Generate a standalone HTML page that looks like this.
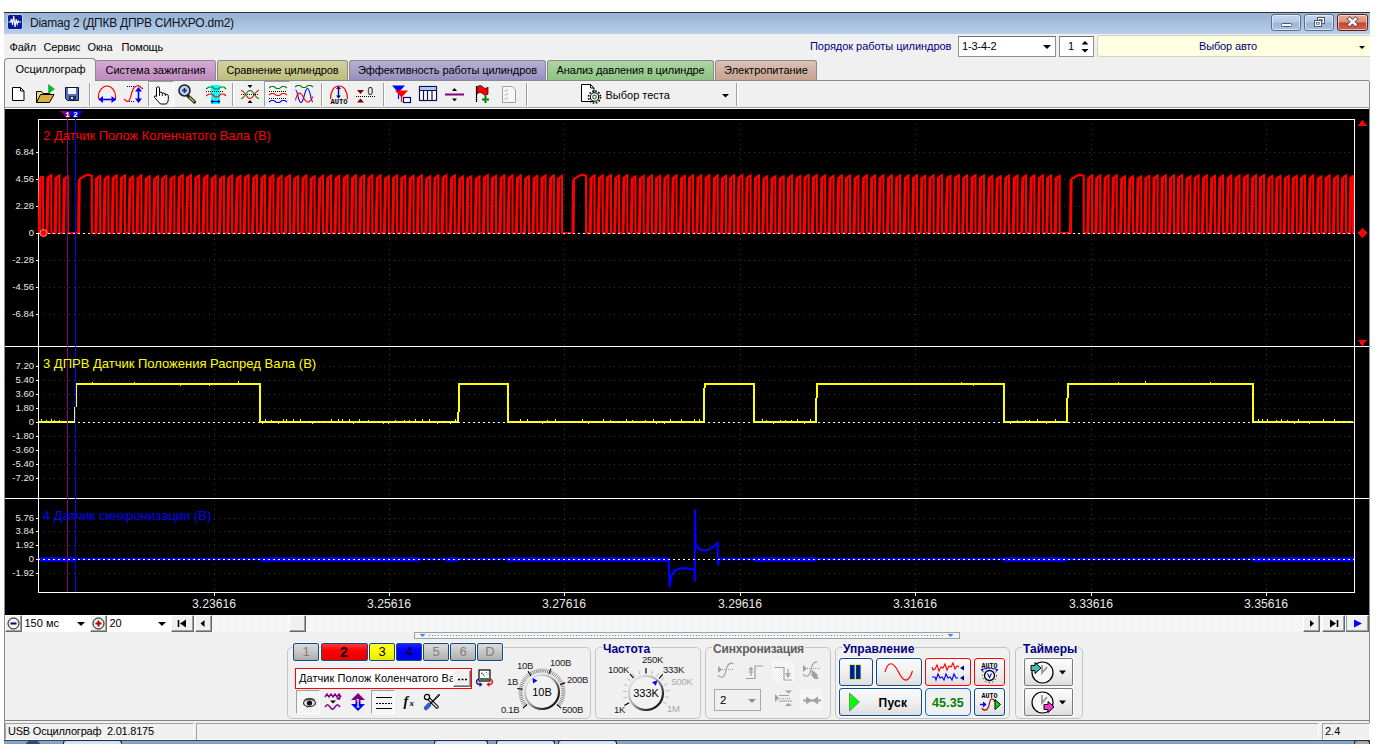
<!DOCTYPE html>
<html lang="ru"><head><meta charset="utf-8"><title>Diamag 2</title>
<style>
html,body{margin:0;padding:0;background:#fff;}
body{width:1382px;height:744px;overflow:hidden;position:relative;font-family:"Liberation Sans",sans-serif;font-size:11px;color:#000;}
#win{position:absolute;left:4px;top:12px;width:1366px;height:732px;background:#f0f0f0;overflow:hidden;}
#win *{box-sizing:border-box;}
#win div,#win span,#win svg,#win i,#win b{position:absolute;}
#win span,#win b{white-space:pre;line-height:14px;height:14px;}
#lb{left:0;top:52px;width:1px;height:680px;background:#8c8c8c;}
#rb{left:1365px;top:69px;width:1px;height:663px;background:#8c8c8c;}
#tb{left:0;top:0;width:1366px;height:22px;background:linear-gradient(#98b4d2 0%,#9db8d6 25%,#a8c2df 55%,#b8d0ea 100%);border-top:1px solid #343434;}
#tb .ttl{left:26px;top:3px;font-size:12px;letter-spacing:-0.25px;color:#101020;}
.cap{top:1px;height:17px;width:30px;border:1px solid #5a6f8c;border-radius:3px;background:linear-gradient(#c3d6ec 0%,#b4cbe6 48%,#97b4d6 52%,#a9c4e2 100%);box-shadow:inset 0 0 0 1px rgba(255,255,255,.55);}
.cap.x{background:linear-gradient(#e9a99b 0%,#dd8d7c 48%,#c4452c 52%,#d0674f 100%);border-color:#5c1f1c;}
#menu span{top:27.5px;letter-spacing:-0.15px;}
.navy{color:#000080;}
.combo{background:#fff;border:1px solid #8e8f8f;border-top-color:#6f6f6f;}
.arr{width:0;height:0;border-left:4px solid transparent;border-right:4px solid transparent;border-top:4px solid #000;}
.tab{top:48px;height:20px;border:1px solid #8a8a8a;border-bottom:none;border-radius:3px 3px 0 0;text-align:center;}
.tab span{position:static !important;display:inline-block;line-height:19px !important;height:19px !important;}
.tab.on{top:46px;height:23px;background:#f0f0f0;z-index:2;border-radius:4px 4px 0 0;}
.tab.on span{line-height:20px !important;padding-left:1px;}
#tabline{left:1px;top:68px;width:1364px;height:1px;background:#8a8a8a;}
#tbar{left:1px;top:69px;width:1364px;height:28px;background:#f0f0f0;border-bottom:1px solid #fff;}
#tbar:after{content:"";position:absolute;left:0;right:0;bottom:0;height:1px;background:#a0a0a0;}
.sep{top:2px;width:2px;height:23px;border-left:1px solid #a0a0a0;border-right:1px solid #fff;}
.chk{background-image:conic-gradient(#fff 25%,#ececec 0 50%,#fff 0 75%,#ececec 0);background-size:2px 2px;border:1px solid;border-color:#a0a0a0 #fff #fff #a0a0a0;}
#plot{left:1px;top:97px;width:1364px;height:506px;background:#000;}
#plot svg{left:0;top:0;}
#srow{background-color:#f7f7f7;background-image:conic-gradient(#fff 25%,#eee 0 50%,#fff 0 75%,#eee 0);background-size:2px 2px;}
.btn3{background:#f0f0f0;border:1px solid;border-color:#fff #696969 #696969 #fff;box-shadow:inset -1px -1px 0 #a0a0a0;}
#panel{background:#f0f0f0;border-bottom:1px solid #828282;}
.grp{border:1px solid #c4c4c4;border-radius:5px;}
.grp b{top:-6px;left:6px;font-size:12px;background:#f0f0f0;padding:0 1px;font-weight:bold;line-height:14px;}
.chb{border:1px solid #0f4a8a;border-radius:2px;text-align:center;font-size:13px;line-height:16px;color:#808080;background:linear-gradient(#dcdcdc,#c6c6c6 50%,#aeaeae);box-shadow:0 0 0 1px rgba(255,255,255,.6);}
.cb{border:1px solid #0f4a8a;border-radius:3px;background:linear-gradient(#fbfbfb,#f0f0f0 50%,#dedede);box-shadow:0 0 0 1px rgba(255,255,255,.7);}
.cb.r{border-color:#ff0000;}
.cb.bl{border-color:#1565c0;background:#f0f0f0;border-radius:4px;}
.cb.g{border-color:#7c7c7c;border-radius:2px;}
.kl{font-size:9.5px;letter-spacing:-0.3px;color:#202020;}
.kl.d{color:#a8a8a8;}
#status{left:1px;top:710px;width:1364px;height:18px;}
.sp{top:1px;height:16px;border:1px solid;border-color:#a0a0a0 #fff #fff #a0a0a0;}
#task{left:0;top:728px;width:1366px;height:4px;background:linear-gradient(#344258 0,#344258 1px,#92abcf 1px,#7f9ac1 100%);}
#task i{top:0;height:4px;border:1px solid #1c2638;border-bottom:none;border-radius:3px 3px 0 0;background:#d3e2f3;}

</style></head>
<body>
<div id="win">
<div id="tb">
<svg style="left:2.500px;top:1px" width="16" height="16" viewBox="0 0 16 16"><rect x="0.5" y="0.5" width="15" height="15" rx="2" fill="#0a1a9c" stroke="#c8d8f0"/><path d="M1.5 8h2l1-3 1 6 1.2-9 1.3 11 1.2-8 1 5 1-3 .8 1h2" fill="none" stroke="#fff" stroke-width="1.1"/></svg>
<span class="ttl">Diamag 2 (ДПКВ ДПРВ СИНХРО.dm2)</span>
<div class="cap" style="left:1267px"><svg width="28" height="14" viewBox="0 0 28 14" style="left:0;top:0"><rect x="9.5" y="8.5" width="10" height="3" rx="1" fill="#fff" stroke="#50586a"/></svg></div>
<div class="cap" style="left:1300px"><svg width="28" height="14" viewBox="0 0 28 14" style="left:0;top:0"><rect x="12.500" y="2.500" width="7" height="6" fill="#fff" stroke="#50586a"/><rect x="14.5" y="4.500" width="3" height="2" fill="#b8cce4" stroke="#50586a" stroke-width=".6"/><rect x="9.500" y="5.500" width="7" height="6" fill="#fff" stroke="#50586a"/><rect x="11.5" y="7.500" width="3" height="2" fill="#b8cce4" stroke="#50586a" stroke-width=".6"/></svg></div>
<div class="cap x" style="left:1333px;width:31px"><svg width="29" height="14" viewBox="0 0 29 14" style="left:0;top:0"><path d="M11.500 4l6 5.500M17.500 4l-6 5.500" stroke="#50404a" stroke-width="4" stroke-linecap="square"/><path d="M11.500 4l6 5.500M17.500 4l-6 5.500" stroke="#fff" stroke-width="2.400" stroke-linecap="square"/></svg></div>
</div>
<div id="lb"></div><div id="rb"></div>
<div id="menu">
<span style="left:5.500px">Файл</span><span style="left:39.500px">Сервис</span><span style="left:83.500px">Окна</span><span style="left:117.500px">Помощь</span>
<span class="navy" style="left:806px;top:27px;letter-spacing:-0.04px">Порядок работы цилиндров</span>
<div class="combo" style="left:954px;top:24px;width:98px;height:21px"><span style="left:3px;top:2px">1-3-4-2</span><i class="arr" style="left:84px;top:8px"></i></div>
<div class="combo" style="left:1055px;top:24px;width:35px;height:21px"><span style="left:8px;top:2px">1</span>
<svg width="12" height="16" viewBox="0 0 12 16" style="left:19px;top:2px"><path d="M2.500 5.500l3.500-3.500 3.500 3.500zM2.500 10l3.500 3.500 3.500-3.500z" fill="#000"/></svg></div>
<div style="left:1093px;top:23px;width:273px;height:22px;background:#ffffe1;border:1px solid #d4d0c0;border-radius:3px 0 0 3px;border-right:none"><span class="navy" style="left:101px;top:2.500px">Выбор авто</span><i class="arr" style="left:261px;top:10px;border-left-width:3px;border-right-width:3px;border-top-width:3px"></i></div>
</div>
<div id="tabs">
<div class="tab on" style="left:0;width:92px"><span style="letter-spacing:-0.1px">Осциллограф</span></div>
<div class="tab" style="left:91px;width:121px;background:linear-gradient(#d5abd5,#c797c7 60%,#bd8bbd)"><span>Система зажигания</span></div>
<div class="tab" style="left:213px;width:131px;background:linear-gradient(#d2d2a0,#c6c68a 60%,#bcbc7c)"><span style="letter-spacing:-0.18px">Сравнение цилиндров</span></div>
<div class="tab" style="left:345px;width:197px;background:linear-gradient(#b6b0d4,#a59ec8 60%,#968eba)"><span style="letter-spacing:-0.09px">Эффективность работы цилиндров</span></div>
<div class="tab" style="left:543px;width:167px;background:linear-gradient(#aed6a4,#9aca90 60%,#8ec284)"><span style="letter-spacing:-0.1px">Анализ давления в цилиндре</span></div>
<div class="tab" style="left:711px;width:102px;background:linear-gradient(#dcc2b6,#cfae9f 60%,#c6a292)"><span>Электропитание</span></div>
<div id="tabline"></div>
</div>

<div id="tbar">
<div class="chk" style="left:143px;top:0;width:26px;height:26px"></div>
<div class="chk" style="left:259px;top:0;width:26px;height:26px"></div>
<div class="sep" style="left:84px"></div><div class="sep" style="left:227px"></div><div class="sep" style="left:316px"></div><div class="sep" style="left:378px"></div><div class="sep" style="left:521px"></div><div class="sep" style="left:731px"></div>
<svg width="760" height="27" viewBox="0 0 760 27" style="left:0;top:1px" fill="none">
<!-- new -->
<path d="M7.500 5.500h8l3.500 3.500v9.500h-11.500z" fill="#fff" stroke="#000"/><path d="M15.500 5.500v3.500h3.500" stroke="#000"/>
<!-- open -->
<path d="M31.500 20.500v-11h5l1.500 2h7v2.500" fill="#e8d890" stroke="#000"/><path d="M31.500 20.500l4-8h13.500l-4.500 8z" fill="#d8b040" stroke="#000"/><path d="M43.500 2.500l6 4.500-6 4.500z" fill="#00c020" stroke="#00a018" stroke-width=".5"/>
<!-- save -->
<path d="M60.500 5.500h13v13h-11l-2-2z" fill="#5070c8" stroke="#101040"/><rect x="63" y="6" width="8" height="6" fill="#fff"/><rect x="64" y="14" width="7" height="4" fill="#283060"/><rect x="66" y="15" width="2" height="2" fill="#e0e8ff"/>
<!-- 4: arc + h arrow -->
<path d="M93.500 17v-3c0-5 4-10 8.500-10s8.500 5 8.500 10v3" stroke="#ff0000" stroke-width="1.200"/><path d="M94 17.500h17" stroke="#0000ff" stroke-width="1.600"/><path d="M93.500 17.500l4.500-3.500v7zM111 17.500l-4.500-3.500v7z" fill="#0000ff"/>
<!-- 5: s-curve + v arrow -->
<path d="M122 4.500h8M122 19.500h8" stroke="#000" stroke-dasharray="1 1"/><path d="M119 17l3 2.500c3 0 3.500-4 4.500-8s3-8 7-8l4.500 3.500" stroke="#ff0000" stroke-width="1.200"/><path d="M133.500 8v9" stroke="#0000ff" stroke-width="1.600"/><path d="M133.500 5l3.500 4.500h-7zM133.500 21l3.500-4.500h-7z" fill="#0000ff"/>
<!-- 6: hand -->
<path d="M151.5 5.500q1.500-1.600 3 0V10.500q1.400-1 2.800.2v.8q1.500-1 3 .2v.9q1.600-.7 3 .7V17.500q0 2.300-2 4.500H155.500L149.500 15.500q-.5-1.900 1.500-1.600l.5.600z" fill="#fff" stroke="#000" stroke-width="1"/><path d="M154.500 10.500v3.500M157.300 11.500v2.500M160.300 12v2" stroke="#000" stroke-width=".9"/>
<!-- 7: magnifier -->
<path d="M183 14l6.500 6" stroke="#202020" stroke-width="3.200" stroke-linecap="round"/><path d="M184.500 15.500l4.500 4" stroke="#e0b040" stroke-width="1.400" stroke-linecap="round"/><circle cx="179.500" cy="8.500" r="5.500" fill="#b8d0f0" stroke="#202020" stroke-width="1.500"/><path d="M177 8.500h5M179.500 6v5" stroke="#10307c" stroke-width="1.600"/>
<!-- 8: cyan waves -->
<rect x="206" y="3" width="9" height="19" fill="#00ffff"/><path d="M201 7l3-2 3 0 3 2 3 0 3-2 3 0 2 2" stroke="#008000" stroke-width="1.200"/><path d="M201 9.500h18" stroke="#000" stroke-dasharray="1 1"/><path d="M201 14l3-2 3 0 3 3 3 0 3-3 3 0 2 2" stroke="#ff0000" stroke-width="1.200"/><path d="M206.500 19.500h8" stroke="#0000a0" stroke-width="1.200"/><path d="M205.500 19.500l2.500-2v4zM215.500 19.500l-2.500-2v4z" fill="#0000a0"/>
<!-- 9: crossing -->
<path d="M242.500 3h5l-2.500 3zM242.500 21h5l-2.500-3z" fill="#000"/><path d="M236 12.500h18" stroke="#000" stroke-dasharray="1 1"/><path d="M236 8.500c4 0 5 8 9 8s5-8 9-8" stroke="#ff0000" stroke-width="1.200"/><path d="M236 16.500c4 0 5-8 9-8s5 8 9 8" stroke="#008000" stroke-width="1.200"/>
<!-- 10: three waves -->
<path d="M264 6l2-1.500h3l2.500 2h3l2.500-2h3l2 1.500" stroke="#008000" stroke-width="1.100"/><path d="M264 9.500h17M264 16.500h17" stroke="#000" stroke-dasharray="1 1"/><path d="M264 13l2-1.500h3l2.500 2h3l2.500-2h3l2 1.500" stroke="#ff0000" stroke-width="1.100"/><path d="M264 20l2-1.500h3l2.500 2h3l2.500-2h3l2 1.500" stroke="#0000ff" stroke-width="1.100"/>
<!-- 11: multi -->
<path d="M290 5l2-1.500h3l2.500 2h3l2.500-2h3l2 1.500" stroke="#008000" stroke-width="1.100"/><path d="M290.500 8c2.500 0 2.500 12.500 5.500 12.500s3.500-14 6.500-14 3 13.500 5.500 13.500" stroke="#0000ff" stroke-width="1.100"/><path d="M290.500 18.500c1.500-8 4.500-9 6.500-5.500s3.500 8 6.500 7 3-3.500 4.500-5.500" stroke="#ff0000" stroke-width="1.100"/>
<!-- 12: auto -->
<path d="M325.500 17c0-7 3-13 8.500-13s8.500 6 8.500 13" stroke="#ff0000" stroke-width="1.200"/><path d="M333.500 6v9" stroke="#000080" stroke-width="1.400"/><path d="M333.500 4l2.500 3h-5zM333.500 16.500l2.500-3h-5z" fill="#000080"/>
<text x="325.500" y="21.500" font-family="'Liberation Mono',monospace" font-size="6.500" font-weight="bold" fill="#000" textLength="17" lengthAdjust="spacingAndGlyphs">AUTO</text>
<!-- 13: zero -->
<path d="M352 8h7l-3.500 4zM352 20.500h7l-3.500-4z" fill="#800000"/><path d="M351 14.500h19" stroke="#000" stroke-dasharray="1 1"/>
<text x="362.500" y="12.500" font-family="'Liberation Sans',sans-serif" font-size="10" fill="#000">0</text>
<!-- 14: cursors -->
<path d="M387 3.500h13l-6.500 7z" fill="#0000ff"/><path d="M393.500 10v7" stroke="#0000ff" stroke-width="1.200"/><path d="M390 8.500h13l-6.500 7z" fill="#ff0000"/><path d="M396.500 15v5" stroke="#ff0000" stroke-width="1.200"/><rect x="398.500" y="15.500" width="7" height="5" fill="#fff" stroke="#000080" stroke-width="1.200"/>
<!-- 15: table -->
<rect x="414.500" y="4.500" width="17" height="14" fill="#fff" stroke="#101050" stroke-width="1.200"/><rect x="415" y="5" width="16" height="3" fill="#a8c8f0"/><path d="M418.500 8v10M422.500 8v10M427 8v10M415 8.500h16" stroke="#101050" stroke-width="1.200"/>
<!-- 16: purple line -->
<path d="M440 12.500h19" stroke="#800080" stroke-width="2"/><path d="M447 9h5l-2.500-3zM447 16.500h5l-2.500 3z" fill="#000"/>
<!-- 17: flag -->
<path d="M471.500 4v16" stroke="#000" stroke-width="1.200"/><path d="M472 5c2-2 4-2 6 0s3.500 1.500 5 0v7c-1.500 1.500-3 2-5 0s-4-2-6 0z" fill="#ff0000" stroke="#000" stroke-width=".7"/><path d="M477 17.500h7M480.500 14v7" stroke="#008000" stroke-width="2"/>
<!-- 18: disabled doc -->
<path d="M497.500 4.500h9.500l3.500 3.500v12.500h-13z" fill="#f8f8f8" stroke="#a0a0a0"/><path d="M499.500 8l1.500 1.500 2-2.500M499.500 12l1.500 1.500 2-2.500M499.500 16l1.500 1.500 2-2.500" stroke="#a8a8a8" stroke-width=".9"/>
<!-- 19: doc + gear -->
<path d="M576.500 2.500h9l3.500 3.500v13.500h-12.500z" fill="#fff" stroke="#000"/><path d="M585.500 2.500v3.500h3.500" stroke="#000"/><circle cx="589.500" cy="15" r="4.200" fill="#fff" stroke="#000" stroke-width="1.100"/><circle cx="589.500" cy="15" r="6" stroke="#000" stroke-width="1.600" stroke-dasharray="1.600 1.540"/><circle cx="589.500" cy="15" r="1.800" fill="#fff" stroke="#308030" stroke-width="1.200"/>
<path d="M717 12h7l-3.500 3.500z" fill="#000"/>
</svg>
<span style="left:600.500px;top:7px">Выбор теста</span>
</div>

<div id="plot">
<svg class="plot" width="1364" height="506" viewBox="0 0 1364 506" shape-rendering="crispEdges">
<rect width="1364" height="506" fill="#000"/>
<path d="M39 43.5 H1346 M39 70.5 H1346 M39 97.5 H1346 M39 151.5 H1346 M39 178.5 H1346 M39 205.5 H1346 M39 257.5 H1346 M39 271.5 H1346 M39 285.5 H1346 M39 299.5 H1346 M39 327.5 H1346 M39 341.5 H1346 M39 355.5 H1346 M39 369.5 H1346 M39 409.5 H1346 M39 422.5 H1346 M39 436.5 H1346 M39 464.5 H1346" stroke="#36360b" stroke-width="1" stroke-dasharray="1 4" fill="none"/>
<path d="M209.5 15 V483 M384.5 15 V483 M559.5 15 V483 M735.5 15 V483 M910.5 15 V483 M1086.5 15 V483 M1261.5 15 V483" stroke="#36360b" stroke-width="1" stroke-dasharray="1 4" fill="none"/>
<path d="M33 10.5 H1350 M33.5 10 V484 M1349.5 10 V484 M33 483.5 H1350 M0 237.5 H1364 M0 389.5 H1364" stroke="#fff" stroke-width="1" fill="none"/>
<path d="M31 43.5 h2 M31 70.5 h2 M31 97.5 h2 M31 124.5 h2 M31 151.5 h2 M31 178.5 h2 M31 205.5 h2 M31 257.5 h2 M31 271.5 h2 M31 285.5 h2 M31 299.5 h2 M31 313.5 h2 M31 327.5 h2 M31 341.5 h2 M31 355.5 h2 M31 369.5 h2 M31 409.5 h2 M31 422.5 h2 M31 436.5 h2 M31 450.5 h2 M31 464.5 h2 M209.5 484 v3 M384.5 484 v3 M559.5 484 v3 M735.5 484 v3 M910.5 484 v3 M1086.5 484 v3 M1261.5 484 v3" stroke="#fff" stroke-width="1" fill="none"/>
<path d="M34 450.5 H70 M255 450.5 H414 M441 450.5 H453 M502 450.5 H664 M749 450.5 H811 M999 450.5 H1062 M1247 450.5 H1349" stroke="#0000ff" stroke-width="4.6" fill="none" shape-rendering="geometricPrecision"/>
<path d="M34 450 L663.6 450 L664.3 466 L664.6 477.5 L665.3 471 L666.5 467 L668.5 463 L671 461 L674 459.6 L678 459.2 L683 459.6 L687 460.2 L689.6 460.5 L689.8 471.5 L690 401.5 L690.3 432 L691 436 L693 439 L696 440.8 L699 441.6 L703 440.8 L707 438.6 L710 436.4 L712.6 433.6 L713 455.5 L714 451 L715.5 449 L717 450.5 L719 450 L1348 450" stroke="#0000ff" stroke-width="2.3" fill="none" stroke-linejoin="round" shape-rendering="geometricPrecision"/>
<path d="M34 313 L70.2 313 L71 275 L255 275 L255 313 L453.3 313 L454.1 275 L503.2 275 L503.2 313 L698.8 313 L699.6 275 L748.9 275 L748.9 313 L811 313 L811.8 275 L999 275 L999 313 L1062 313 L1062.8 275 L1248.3 275 L1248.3 313 L1348 313" stroke="#ffff00" stroke-width="2" fill="none"/>
<path d="M36 312 v-2 M41.4 312 v-1.5 M46.6 312 v-2 M49.8 312 v-1.5 M54.2 312 v-1.5 M62.2 312 v-2 M69 312 v-1.5 M87.2 274 v-1.5 M129.2 274 v-1.5 M175 274 v2.5 M204.9 274 v2.5 M233.3 274 v-2 M257.2 312 v3 M260.6 312 v-2.5 M266.4 312 v-1.5 M273.8 312 v3 M278.5 312 v-2.5 M281.7 312 v-2 M288.3 312 v-2 M295.9 312 v-2 M307.3 312 v3 M326.2 312 v-2.5 M333.3 312 v-2 M337.2 312 v-2 M344.1 312 v-2 M348.7 312 v3 M354.9 312 v-2.5 M363.7 312 v-1.5 M378.1 312 v3 M383.5 312 v3 M390.3 312 v-1.5 M399.2 312 v-1.5 M404.2 312 v-1.5 M410.6 312 v-2.5 M417.3 312 v-2 M424 312 v-2.5 M432.7 312 v3 M445.4 312 v3 M450.3 312 v-2.5 M515.5 312 v-2.5 M522.4 312 v-2 M537.6 312 v3 M542.8 312 v-1.5 M550.5 312 v-2 M577.5 312 v-2 M583.3 312 v3 M598.1 312 v-2.5 M605.9 312 v-1.5 M621.8 312 v-2 M627.4 312 v-1.5 M640.6 312 v-1.5 M648 312 v-2 M651.1 312 v3 M659 312 v3 M665.9 312 v-2 M676.4 312 v-2 M689.9 312 v-2.5 M694.2 312 v-2.5 M698.8 312 v-2 M757.8 312 v-2 M761.8 312 v-1.5 M768.2 312 v3 M775.9 312 v-1.5 M780.4 312 v-1.5 M786.4 312 v-1.5 M792.1 312 v-2 M799.2 312 v3 M805.3 312 v-2.5 M956.3 274 v-1.5 M968.1 274 v2.5 M1005.1 312 v3 M1012.3 312 v-1.5 M1020.1 312 v-1.5 M1024.8 312 v-1.5 M1032.6 312 v-2 M1041.7 312 v3 M1050.3 312 v-2 M1113.6 274 v-1.5 M1140.5 274 v-2 M1205.1 274 v-1.5 M1253 312 v-2 M1257 312 v-2.5 M1262.1 312 v-2.5 M1271.5 312 v-1.5 M1276.5 312 v-2.5 M1282.5 312 v-1.5 M1289.9 312 v3 M1293 312 v-2 M1304.7 312 v3 M1318.2 312 v-2 M1329.8 312 v-2" stroke="#ffff00" stroke-width="1" fill="none"/>
<path d="M34.6 124 L35.4 69.5 L35.9 68 L38 68 L38 124 L42.2 124 L42.7 95.4 L43.2 69.3 L43.8 68 L45.1 66.8 L46.3 66.2 L46.3 124 L46.4 124 L50.4 124 L50.8 95.6 L51.2 69.7 L51.8 68.4 L53.3 67.2 L54.5 66.6 L54.5 124 L54.6 124 L58.7 124 L59.2 96 L59.7 70.5 L60.3 69.2 L61.6 68 L62.8 67.4 L62.8 124 L62.9 124 L73.9 124 L74.4 70.7 L75.6 69.2 L77.1 68.7 L78.6 67.4 L80.6 66.6 L82.6 65.6 L84.1 66 L86.8 66.6 L86.8 124 L91.1 124 L91.5 95.8 L91.9 70.1 L92.5 68.8 L94 67.6 L95.2 67 L95.2 124 L95.3 124 L99.3 124 L99.8 96 L100.3 70.5 L100.9 69.2 L102.2 68 L103.4 67.4 L103.4 124.8 L103.5 124 L107.6 124 L108 95.6 L108.4 69.7 L109 68.4 L110.5 67.2 L111.7 66.6 L111.7 124.8 L111.8 124 L115.8 124 L116.2 95.6 L116.6 69.7 L117.2 68.4 L118.7 67.2 L119.9 66.6 L119.9 124 L120 124 L124.1 124 L124.7 96 L125.3 70.5 L125.9 69.2 L127 68 L128.2 67.4 L128.2 124 L128.3 124 L132.3 124 L132.8 95.6 L133.3 69.7 L133.9 68.4 L135.2 67.2 L136.4 66.6 L136.4 124 L136.5 124 L140.6 124 L141.1 96 L141.6 70.5 L142.2 69.2 L143.5 68 L144.7 67.4 L144.7 124 L144.8 124 L148.8 124 L149.4 96 L150 70.5 L150.6 69.2 L151.7 68 L152.9 67.4 L152.9 124.8 L153 124 L157.1 124 L157.5 95.8 L157.9 70.1 L158.5 68.8 L160 67.6 L161.2 67 L161.2 124.8 L161.3 124 L165.3 124 L165.8 96 L166.3 70.5 L166.9 69.2 L168.2 68 L169.4 67.4 L169.4 124 L169.5 124 L173.6 124 L174.1 95.4 L174.6 69.3 L175.2 68 L176.5 66.8 L177.7 66.2 L177.7 124 L177.8 124 L181.8 124 L182.3 95.4 L182.8 69.3 L183.4 68 L184.7 66.8 L185.9 66.2 L185.9 124 L186 124 L190.1 124 L190.6 95.6 L191.1 69.7 L191.7 68.4 L193 67.2 L194.2 66.6 L194.2 124 L194.3 124 L198.3 124 L198.9 95.6 L199.5 69.7 L200.1 68.4 L201.2 67.2 L202.4 66.6 L202.4 124 L202.5 124 L206.5 124 L207 95.8 L207.5 70.1 L208.1 68.8 L209.4 67.6 L210.6 67 L210.6 124 L210.7 124 L214.8 124 L215.3 96 L215.8 70.5 L216.4 69.2 L217.7 68 L218.9 67.4 L218.9 124.8 L219 124 L223 124 L223.5 95.6 L224 69.7 L224.6 68.4 L225.9 67.2 L227.1 66.6 L227.1 124.8 L227.2 124 L231.3 124 L231.9 95.8 L232.5 70.1 L233.1 68.8 L234.2 67.6 L235.4 67 L235.4 124 L235.5 124 L239.5 124 L240 95.4 L240.5 69.3 L241.1 68 L242.4 66.8 L243.6 66.2 L243.6 124 L243.7 124 L247.8 124 L248.4 95.6 L249 69.7 L249.6 68.4 L250.7 67.2 L251.9 66.6 L251.9 124 L252 124 L256 124 L256.6 95.6 L257.2 69.7 L257.8 68.4 L258.9 67.2 L260.1 66.6 L260.1 124 L260.2 124 L264.3 124 L264.9 95.4 L265.5 69.3 L266.1 68 L267.2 66.8 L268.4 66.2 L268.4 124 L268.5 124 L272.5 124 L273 95.8 L273.5 70.1 L274.1 68.8 L275.4 67.6 L276.6 67 L276.6 124 L276.7 124 L280.8 124 L281.2 95.6 L281.6 69.7 L282.2 68.4 L283.7 67.2 L284.9 66.6 L284.9 124 L285 124 L289 124 L289.5 96 L290 70.5 L290.6 69.2 L291.9 68 L293.1 67.4 L293.1 124 L293.2 124 L297.3 124 L297.8 95.6 L298.3 69.7 L298.9 68.4 L300.2 67.2 L301.4 66.6 L301.4 124 L301.5 124 L305.5 124 L306 96 L306.5 70.5 L307.1 69.2 L308.4 68 L309.6 67.4 L309.6 124 L309.7 124 L313.8 124 L314.4 95.8 L315 70.1 L315.6 68.8 L316.7 67.6 L317.9 67 L317.9 124.8 L318 124 L322 124 L322.5 95.6 L323 69.7 L323.6 68.4 L324.9 67.2 L326.1 66.6 L326.1 124 L326.2 124 L330.2 124 L330.8 95.8 L331.4 70.1 L332 68.8 L333.1 67.6 L334.3 67 L334.3 124.8 L334.4 124 L338.5 124 L339 95.6 L339.5 69.7 L340.1 68.4 L341.4 67.2 L342.6 66.6 L342.6 124.8 L342.7 124 L346.7 124 L347.3 95.6 L347.9 69.7 L348.5 68.4 L349.6 67.2 L350.8 66.6 L350.8 124 L350.9 124 L355 124 L355.5 95.6 L356 69.7 L356.6 68.4 L357.9 67.2 L359.1 66.6 L359.1 124 L359.2 124 L363.2 124 L363.7 95.6 L364.2 69.7 L364.8 68.4 L366.1 67.2 L367.3 66.6 L367.3 124.8 L367.4 124 L371.5 124 L372 95.6 L372.5 69.7 L373.1 68.4 L374.4 67.2 L375.6 66.6 L375.6 124 L375.7 124 L379.7 124 L380.2 96 L380.7 70.5 L381.3 69.2 L382.6 68 L383.8 67.4 L383.8 124 L383.9 124 L388 124 L388.4 95.6 L388.8 69.7 L389.4 68.4 L390.9 67.2 L392.1 66.6 L392.1 124.8 L392.2 124 L396.2 124 L396.6 95.8 L397 70.1 L397.6 68.8 L399.1 67.6 L400.3 67 L400.3 124 L400.4 124 L404.5 124 L405 95.8 L405.5 70.1 L406.1 68.8 L407.4 67.6 L408.6 67 L408.6 124 L408.7 124 L412.7 124 L413.1 95.6 L413.5 69.7 L414.1 68.4 L415.6 67.2 L416.8 66.6 L416.8 124 L416.9 124 L421 124 L421.5 96 L422 70.5 L422.6 69.2 L423.9 68 L425.1 67.4 L425.1 124 L425.2 124 L429.2 124 L429.7 95.6 L430.2 69.7 L430.8 68.4 L432.1 67.2 L433.3 66.6 L433.3 124.8 L433.4 124 L437.4 124 L437.9 95.4 L438.4 69.3 L439 68 L440.3 66.8 L441.5 66.2 L441.5 124 L441.6 124 L445.7 124 L446.3 95.6 L446.9 69.7 L447.5 68.4 L448.6 67.2 L449.8 66.6 L449.8 124 L449.9 124 L453.9 124 L454.5 96 L455.1 70.5 L455.7 69.2 L456.8 68 L458 67.4 L458 124 L458.1 124 L462.2 124 L462.6 96 L463 70.5 L463.6 69.2 L465.1 68 L466.3 67.4 L466.3 124 L466.4 124 L470.4 124 L471 96 L471.6 70.5 L472.2 69.2 L473.3 68 L474.5 67.4 L474.5 124.8 L474.6 124 L478.7 124 L479.2 95.4 L479.7 69.3 L480.3 68 L481.6 66.8 L482.8 66.2 L482.8 124 L482.9 124 L486.9 124 L487.3 95.8 L487.7 70.1 L488.3 68.8 L489.8 67.6 L491 67 L491 124 L491.1 124 L495.2 124 L495.8 95.6 L496.4 69.7 L497 68.4 L498.1 67.2 L499.3 66.6 L499.3 124.8 L499.4 124 L503.4 124 L503.9 95.6 L504.4 69.7 L505 68.4 L506.3 67.2 L507.5 66.6 L507.5 124 L507.6 124 L511.7 124 L512.2 95.6 L512.7 69.7 L513.3 68.4 L514.6 67.2 L515.8 66.6 L515.8 124.8 L515.9 124 L519.9 124 L520.4 96 L520.9 70.5 L521.5 69.2 L522.8 68 L524 67.4 L524 124 L524.1 124 L528.2 124 L528.8 95.8 L529.4 70.1 L530 68.8 L531.1 67.6 L532.3 67 L532.3 124 L532.4 124 L536.4 124 L536.9 95.6 L537.4 69.7 L538 68.4 L539.3 67.2 L540.5 66.6 L540.5 124 L540.6 124 L544.7 124 L545.3 95.6 L545.9 69.7 L546.5 68.4 L547.6 67.2 L548.8 66.6 L548.8 124 L548.9 124 L552.9 124 L553.4 95.8 L553.9 70.1 L554.5 68.8 L555.8 67.6 L557 67 L557 124.8 L557.1 124 L568.2 124 L568.7 70.7 L569.9 69.2 L571.4 68.7 L572.9 67.4 L574.9 66.6 L576.9 65.6 L578.4 66 L581.1 66.6 L581.1 124 L585.4 124 L585.9 95.6 L586.4 69.7 L587 68.4 L588.3 67.2 L589.5 66.6 L589.5 124 L589.6 124 L593.6 124 L594.1 95.6 L594.6 69.7 L595.2 68.4 L596.5 67.2 L597.7 66.6 L597.7 124 L597.8 124 L601.8 124 L602.2 95.4 L602.6 69.3 L603.2 68 L604.7 66.8 L605.9 66.2 L605.9 124 L606 124 L610 124 L610.5 95.6 L611 69.7 L611.6 68.4 L612.9 67.2 L614.1 66.6 L614.1 124 L614.2 124 L618.2 124 L618.7 95.4 L619.2 69.3 L619.8 68 L621.1 66.8 L622.3 66.2 L622.3 124 L622.4 124 L626.4 124 L627 96 L627.6 70.5 L628.2 69.2 L629.3 68 L630.5 67.4 L630.5 124.8 L630.6 124 L634.6 124 L635.1 95.8 L635.6 70.1 L636.2 68.8 L637.5 67.6 L638.7 67 L638.7 124.8 L638.8 124 L642.8 124 L643.3 95.6 L643.8 69.7 L644.4 68.4 L645.7 67.2 L646.9 66.6 L646.9 124 L647 124 L651 124 L651.5 95.8 L652 70.1 L652.6 68.8 L653.9 67.6 L655.1 67 L655.1 124 L655.2 124 L659.2 124 L659.7 95.6 L660.2 69.7 L660.8 68.4 L662.1 67.2 L663.3 66.6 L663.3 124 L663.4 124 L667.4 124 L667.9 95.6 L668.4 69.7 L669 68.4 L670.3 67.2 L671.5 66.6 L671.5 124.8 L671.6 124 L675.7 124 L676.3 95.8 L676.9 70.1 L677.5 68.8 L678.6 67.6 L679.8 67 L679.8 124.8 L679.9 124 L683.9 124 L684.3 95.6 L684.7 69.7 L685.3 68.4 L686.8 67.2 L688 66.6 L688 124 L688.1 124 L692.1 124 L692.7 95.6 L693.3 69.7 L693.9 68.4 L695 67.2 L696.2 66.6 L696.2 124.8 L696.3 124 L700.3 124 L700.9 95.4 L701.5 69.3 L702.1 68 L703.2 66.8 L704.4 66.2 L704.4 124 L704.5 124 L708.6 124 L709.2 95.6 L709.8 69.7 L710.4 68.4 L711.5 67.2 L712.7 66.6 L712.7 124.8 L712.8 124 L716.8 124 L717.3 95.8 L717.8 70.1 L718.4 68.8 L719.7 67.6 L720.9 67 L720.9 124 L721 124 L725 124 L725.5 95.6 L726 69.7 L726.6 68.4 L727.9 67.2 L729.1 66.6 L729.1 124 L729.2 124 L733.3 124 L733.7 95.4 L734.1 69.3 L734.7 68 L736.2 66.8 L737.4 66.2 L737.4 124.8 L737.5 124 L741.5 124 L741.9 95.6 L742.3 69.7 L742.9 68.4 L744.4 67.2 L745.6 66.6 L745.6 124 L745.7 124 L749.8 124 L750.3 95.6 L750.8 69.7 L751.4 68.4 L752.7 67.2 L753.9 66.6 L753.9 124 L754 124 L758.1 124 L758.6 96 L759.1 70.5 L759.7 69.2 L761 68 L762.2 67.4 L762.2 124 L762.3 124 L766.3 124 L766.8 96 L767.3 70.5 L767.9 69.2 L769.2 68 L770.4 67.4 L770.4 124.8 L770.5 124 L774.6 124 L775 96 L775.4 70.5 L776 69.2 L777.5 68 L778.7 67.4 L778.7 124 L778.8 124 L782.9 124 L783.4 95.6 L783.9 69.7 L784.5 68.4 L785.8 67.2 L787 66.6 L787 124 L787.1 124 L791.2 124 L791.7 95.8 L792.2 70.1 L792.8 68.8 L794.1 67.6 L795.3 67 L795.3 124 L795.4 124 L799.5 124 L799.9 95.4 L800.3 69.3 L800.9 68 L802.4 66.8 L803.6 66.2 L803.6 124 L803.7 124 L807.7 124 L808.2 95.4 L808.7 69.3 L809.3 68 L810.6 66.8 L811.8 66.2 L811.8 124.8 L811.9 124 L816.1 124 L816.6 95.6 L817.1 69.7 L817.7 68.4 L819 67.2 L820.2 66.6 L820.2 124 L820.3 124 L824.4 124 L824.9 95.8 L825.4 70.1 L826 68.8 L827.3 67.6 L828.5 67 L828.5 124 L828.6 124 L832.7 124 L833.3 95.6 L833.9 69.7 L834.5 68.4 L835.6 67.2 L836.8 66.6 L836.8 124 L836.9 124 L841 124 L841.4 95.6 L841.8 69.7 L842.4 68.4 L843.9 67.2 L845.1 66.6 L845.1 124 L845.2 124 L849.3 124 L849.9 95.8 L850.5 70.1 L851.1 68.8 L852.2 67.6 L853.4 67 L853.4 124 L853.5 124 L857.7 124 L858.2 95.6 L858.7 69.7 L859.3 68.4 L860.6 67.2 L861.8 66.6 L861.8 124.8 L861.9 124 L866 124 L866.5 95.6 L867 69.7 L867.6 68.4 L868.9 67.2 L870.1 66.6 L870.1 124.8 L870.2 124 L874.3 124 L874.8 95.6 L875.3 69.7 L875.9 68.4 L877.2 67.2 L878.4 66.6 L878.4 124.8 L878.5 124 L882.7 124 L883.3 95.6 L883.9 69.7 L884.5 68.4 L885.6 67.2 L886.8 66.6 L886.8 124 L886.9 124 L891 124 L891.5 95.6 L892 69.7 L892.6 68.4 L893.9 67.2 L895.1 66.6 L895.1 124 L895.2 124 L899.4 124 L900 95.6 L900.6 69.7 L901.2 68.4 L902.3 67.2 L903.5 66.6 L903.5 124 L903.6 124 L907.8 124 L908.3 95.6 L908.8 69.7 L909.4 68.4 L910.7 67.2 L911.9 66.6 L911.9 124 L912 124 L916.1 124 L916.6 95.8 L917.1 70.1 L917.7 68.8 L919 67.6 L920.2 67 L920.2 124 L920.3 124 L924.5 124 L924.9 95.6 L925.3 69.7 L925.9 68.4 L927.4 67.2 L928.6 66.6 L928.6 124.8 L928.7 124 L932.9 124 L933.4 95.4 L933.9 69.3 L934.5 68 L935.8 66.8 L937 66.2 L937 124 L937.1 124 L941.3 124 L941.9 95.8 L942.5 70.1 L943.1 68.8 L944.2 67.6 L945.4 67 L945.4 124 L945.5 124 L949.7 124 L950.2 95.4 L950.7 69.3 L951.3 68 L952.6 66.8 L953.8 66.2 L953.8 124.8 L953.9 124 L958 124 L958.5 95.6 L959 69.7 L959.6 68.4 L960.9 67.2 L962.1 66.6 L962.1 124 L962.2 124 L966.4 124 L966.9 95.4 L967.4 69.3 L968 68 L969.3 66.8 L970.5 66.2 L970.5 124.8 L970.6 124 L974.8 124 L975.2 95.6 L975.6 69.7 L976.2 68.4 L977.7 67.2 L978.9 66.6 L978.9 124 L979 124 L983.2 124 L983.8 95.8 L984.4 70.1 L985 68.8 L986.1 67.6 L987.3 67 L987.3 124 L987.4 124 L991.6 124 L992 96 L992.4 70.5 L993 69.2 L994.5 68 L995.7 67.4 L995.7 124 L995.8 124 L1000 124 L1000.5 95.6 L1001 69.7 L1001.6 68.4 L1002.9 67.2 L1004.1 66.6 L1004.1 124 L1004.2 124 L1008.4 124 L1009 95.6 L1009.6 69.7 L1010.2 68.4 L1011.3 67.2 L1012.5 66.6 L1012.5 124 L1012.6 124 L1016.9 124 L1017.5 95.6 L1018.1 69.7 L1018.7 68.4 L1019.8 67.2 L1021 66.6 L1021 124 L1021.1 124 L1025.3 124 L1025.9 95.6 L1026.5 69.7 L1027.1 68.4 L1028.2 67.2 L1029.4 66.6 L1029.4 124 L1029.5 124 L1033.7 124 L1034.1 95.6 L1034.5 69.7 L1035.1 68.4 L1036.6 67.2 L1037.8 66.6 L1037.8 124 L1037.9 124 L1042.1 124 L1042.5 95.6 L1042.9 69.7 L1043.5 68.4 L1045 67.2 L1046.2 66.6 L1046.2 124 L1046.3 124 L1050.5 124 L1050.9 95.8 L1051.3 70.1 L1051.9 68.8 L1053.4 67.6 L1054.6 67 L1054.6 124 L1054.7 124 L1065.8 124 L1066.3 70.7 L1067.5 69.2 L1069 68.7 L1070.5 67.4 L1072.5 66.6 L1074.5 65.6 L1076 66 L1078.7 66.6 L1078.7 124 L1083 124 L1083.5 95.6 L1084 69.7 L1084.6 68.4 L1085.9 67.2 L1087.1 66.6 L1087.1 124.8 L1087.2 124 L1091.2 124 L1091.6 95.6 L1092 69.7 L1092.6 68.4 L1094.1 67.2 L1095.3 66.6 L1095.3 124.8 L1095.4 124 L1099.4 124 L1099.9 95.6 L1100.4 69.7 L1101 68.4 L1102.3 67.2 L1103.5 66.6 L1103.5 124.8 L1103.6 124 L1107.6 124 L1108.1 95.6 L1108.6 69.7 L1109.2 68.4 L1110.5 67.2 L1111.7 66.6 L1111.7 124 L1111.8 124 L1115.8 124 L1116.4 96 L1117 70.5 L1117.6 69.2 L1118.7 68 L1119.9 67.4 L1119.9 124 L1120 124 L1124 124 L1124.5 96 L1125.2 70.5 L1125.8 69.2 L1126.8 68 L1128 67.4 L1128 124 L1128.1 124 L1132.1 124 L1132.7 96 L1133.3 70.5 L1133.9 69.2 L1135 68 L1136.2 67.4 L1136.2 124 L1136.3 124 L1140.3 124 L1140.7 95.8 L1141.1 70.1 L1141.7 68.8 L1143.2 67.6 L1144.4 67 L1144.4 124.8 L1144.5 124 L1148.5 124 L1148.9 95.6 L1149.3 69.7 L1149.9 68.4 L1151.4 67.2 L1152.6 66.6 L1152.6 124 L1152.7 124 L1156.7 124 L1157.1 95.6 L1157.5 69.7 L1158.1 68.4 L1159.6 67.2 L1160.8 66.6 L1160.8 124 L1160.9 124 L1164.9 124 L1165.4 95.6 L1165.9 69.7 L1166.5 68.4 L1167.8 67.2 L1169 66.6 L1169 124 L1169.1 124 L1173.1 124 L1173.5 95.4 L1173.9 69.3 L1174.5 68 L1176 66.8 L1177.2 66.2 L1177.2 124 L1177.3 124 L1181.3 124 L1181.8 96 L1182.3 70.5 L1182.9 69.2 L1184.2 68 L1185.4 67.4 L1185.4 124 L1185.5 124 L1189.5 124 L1189.9 95.6 L1190.3 69.7 L1190.9 68.4 L1192.4 67.2 L1193.6 66.6 L1193.6 124 L1193.7 124 L1197.7 124 L1198.2 95.6 L1198.7 69.7 L1199.3 68.4 L1200.6 67.2 L1201.8 66.6 L1201.8 124 L1201.9 124 L1205.8 124 L1206.4 95.8 L1207 70.1 L1207.6 68.8 L1208.7 67.6 L1209.9 67 L1209.9 124.8 L1210 124 L1214 124 L1214.6 95.6 L1215.2 69.7 L1215.8 68.4 L1216.9 67.2 L1218.1 66.6 L1218.1 124.8 L1218.2 124 L1222.2 124 L1222.8 95.6 L1223.4 69.7 L1224 68.4 L1225.1 67.2 L1226.3 66.6 L1226.3 124 L1226.4 124 L1230.4 124 L1230.9 95.6 L1231.4 69.7 L1232 68.4 L1233.3 67.2 L1234.5 66.6 L1234.5 124 L1234.6 124 L1238.6 124 L1239.1 95.4 L1239.6 69.3 L1240.2 68 L1241.5 66.8 L1242.7 66.2 L1242.7 124 L1242.8 124 L1246.8 124 L1247.4 95.6 L1248 69.7 L1248.6 68.4 L1249.7 67.2 L1250.9 66.6 L1250.9 124 L1251 124 L1255 124 L1255.4 95.4 L1255.8 69.3 L1256.4 68 L1257.9 66.8 L1259.1 66.2 L1259.1 124 L1259.2 124 L1263.2 124 L1263.7 95.8 L1264.2 70.1 L1264.8 68.8 L1266.1 67.6 L1267.3 67 L1267.3 124 L1267.4 124 L1271.4 124 L1271.8 95.8 L1272.2 70.1 L1272.8 68.8 L1274.3 67.6 L1275.5 67 L1275.5 124 L1275.6 124 L1279.6 124 L1280.1 95.8 L1280.6 70.1 L1281.2 68.8 L1282.5 67.6 L1283.7 67 L1283.7 124 L1283.8 124 L1287.8 124 L1288.2 95.8 L1288.5 70.1 L1289.1 68.8 L1290.6 67.6 L1291.8 67 L1291.8 124 L1291.9 124 L1295.9 124 L1296.3 95.6 L1296.7 69.7 L1297.3 68.4 L1298.8 67.2 L1300 66.6 L1300 124 L1300.1 124 L1304.1 124 L1304.7 95.6 L1305.3 69.7 L1305.9 68.4 L1307 67.2 L1308.2 66.6 L1308.2 124.8 L1308.3 124 L1312.3 124 L1312.9 96 L1313.5 70.5 L1314.1 69.2 L1315.2 68 L1316.4 67.4 L1316.4 124 L1316.5 124 L1320.5 124 L1321 95.6 L1321.5 69.7 L1322.1 68.4 L1323.4 67.2 L1324.6 66.6 L1324.6 124.8 L1324.7 124 L1328.7 124 L1329.2 95.8 L1329.7 70.1 L1330.3 68.8 L1331.6 67.6 L1332.8 67 L1332.8 124 L1332.9 124 L1336.9 124 L1337.4 95.6 L1337.9 69.7 L1338.5 68.4 L1339.8 67.2 L1341 66.6 L1341 124 L1341.1 124 L1345.1 124 L1345.6 95.4 L1346.1 69.3 L1346.7 68 L1348 66.8 L1348 66.2 L1348 124 L1348 124 L1348 124" stroke="#ff0000" stroke-width="2.15" fill="none" stroke-linejoin="miter" shape-rendering="geometricPrecision"/>
<path d="M34.3 124 L35.1 69 M41.9 124 L42.9 67.8 M50.1 124 L50.9 68.2 M58.4 124 L59.4 69 M73.6 124 L74.1 70.7 M90.8 124 L91.6 68.6 M99 124 L100 69 M107.3 124 L108.1 68.2 M115.5 124 L116.3 68.2 M123.8 124 L125 69 M132 124 L133 68.2 M140.3 124 L141.3 69 M148.5 124 L149.7 69 M156.8 124 L157.6 68.6 M165 124 L166 69 M173.3 124 L174.3 67.8 M181.5 124 L182.5 67.8 M189.8 124 L190.8 68.2 M198 124 L199.2 68.2 M206.2 124 L207.2 68.6 M214.5 124 L215.5 69 M222.7 124 L223.7 68.2 M231 124 L232.2 68.6 M239.2 124 L240.2 67.8 M247.5 124 L248.7 68.2 M255.7 124 L256.9 68.2 M264 124 L265.2 67.8 M272.2 124 L273.2 68.6 M280.5 124 L281.3 68.2 M288.7 124 L289.7 69 M297 124 L298 68.2 M305.2 124 L306.2 69 M313.5 124 L314.7 68.6 M321.7 124 L322.7 68.2 M329.9 124 L331.1 68.6 M338.2 124 L339.2 68.2 M346.4 124 L347.6 68.2 M354.7 124 L355.7 68.2 M362.9 124 L363.9 68.2 M371.2 124 L372.2 68.2 M379.4 124 L380.4 69 M387.7 124 L388.5 68.2 M395.9 124 L396.7 68.6 M404.2 124 L405.2 68.6 M412.4 124 L413.2 68.2 M420.7 124 L421.7 69 M428.9 124 L429.9 68.2 M437.1 124 L438.1 67.8 M445.4 124 L446.6 68.2 M453.6 124 L454.8 69 M461.9 124 L462.7 69 M470.1 124 L471.3 69 M478.4 124 L479.4 67.8 M486.6 124 L487.4 68.6 M494.9 124 L496.1 68.2 M503.1 124 L504.1 68.2 M511.4 124 L512.4 68.2 M519.6 124 L520.6 69 M527.9 124 L529.1 68.6 M536.1 124 L537.1 68.2 M544.4 124 L545.6 68.2 M552.6 124 L553.6 68.6 M567.9 124 L568.4 70.7 M585.1 124 L586.1 68.2 M593.3 124 L594.3 68.2 M601.5 124 L602.3 67.8 M609.7 124 L610.7 68.2 M617.9 124 L618.9 67.8 M626.1 124 L627.3 69 M634.3 124 L635.3 68.6 M642.5 124 L643.5 68.2 M650.7 124 L651.7 68.6 M658.9 124 L659.9 68.2 M667.1 124 L668.1 68.2 M675.4 124 L676.6 68.6 M683.6 124 L684.4 68.2 M691.8 124 L693 68.2 M700 124 L701.2 67.8 M708.3 124 L709.5 68.2 M716.5 124 L717.5 68.6 M724.7 124 L725.7 68.2 M733 124 L733.8 67.8 M741.2 124 L742 68.2 M749.5 124 L750.5 68.2 M757.8 124 L758.8 69 M766 124 L767 69 M774.3 124 L775.1 69 M782.6 124 L783.6 68.2 M790.9 124 L791.9 68.6 M799.2 124 L800 67.8 M807.4 124 L808.4 67.8 M815.8 124 L816.8 68.2 M824.1 124 L825.1 68.6 M832.4 124 L833.6 68.2 M840.7 124 L841.5 68.2 M849 124 L850.2 68.6 M857.4 124 L858.4 68.2 M865.7 124 L866.7 68.2 M874 124 L875 68.2 M882.4 124 L883.6 68.2 M890.7 124 L891.7 68.2 M899.1 124 L900.3 68.2 M907.5 124 L908.5 68.2 M915.8 124 L916.8 68.6 M924.2 124 L925 68.2 M932.6 124 L933.6 67.8 M941 124 L942.2 68.6 M949.4 124 L950.4 67.8 M957.7 124 L958.7 68.2 M966.1 124 L967.1 67.8 M974.5 124 L975.3 68.2 M982.9 124 L984.1 68.6 M991.3 124 L992.1 69 M999.7 124 L1000.7 68.2 M1008.1 124 L1009.3 68.2 M1016.6 124 L1017.8 68.2 M1025 124 L1026.2 68.2 M1033.4 124 L1034.2 68.2 M1041.8 124 L1042.6 68.2 M1050.2 124 L1051 68.6 M1065.5 124 L1066 70.7 M1082.7 124 L1083.7 68.2 M1090.9 124 L1091.7 68.2 M1099.1 124 L1100.1 68.2 M1107.3 124 L1108.3 68.2 M1115.5 124 L1116.7 69 M1123.7 124 L1124.9 69 M1131.8 124 L1133 69 M1140 124 L1140.8 68.6 M1148.2 124 L1149 68.2 M1156.4 124 L1157.2 68.2 M1164.6 124 L1165.6 68.2 M1172.8 124 L1173.6 67.8 M1181 124 L1182 69 M1189.2 124 L1190 68.2 M1197.4 124 L1198.4 68.2 M1205.5 124 L1206.8 68.6 M1213.7 124 L1214.9 68.2 M1221.9 124 L1223.1 68.2 M1230.1 124 L1231.1 68.2 M1238.3 124 L1239.3 67.8 M1246.5 124 L1247.7 68.2 M1254.7 124 L1255.5 67.8 M1262.9 124 L1263.9 68.6 M1271.1 124 L1271.9 68.6 M1279.3 124 L1280.3 68.6 M1287.5 124 L1288.2 68.6 M1295.6 124 L1296.4 68.2 M1303.8 124 L1305 68.2 M1312 124 L1313.2 69 M1320.2 124 L1321.2 68.2 M1328.4 124 L1329.4 68.6 M1336.6 124 L1337.6 68.2 M1344.8 124 L1345.8 67.8" stroke="#ff0000" stroke-width="2.9" fill="none" shape-rendering="geometricPrecision"/>
<path d="M33 124.5 H1349 M33 313.5 H1349 M33 450.5 H1349" stroke="#fff" stroke-width="1" stroke-dasharray="2 3" fill="none"/>
<path d="M62.5 2 V483" stroke="#800080" stroke-width="1"/>
<path d="M70.5 2 V483" stroke="#0000ff" stroke-width="1"/>
<path d="M55 2 h15 l-7.5 7.5z" fill="#800080" shape-rendering="auto"/>
<path d="M63 2 h15 l-7.5 7.5z" fill="#0000ff" shape-rendering="auto"/>
<text x="62.5" y="8.3" font-family="'Liberation Mono',monospace" font-weight="bold" font-size="7.5" fill="#fff" text-anchor="middle" shape-rendering="auto">1</text>
<text x="70.5" y="8.3" font-family="'Liberation Mono',monospace" font-weight="bold" font-size="7.5" fill="#fff" text-anchor="middle" shape-rendering="auto">2</text>
<path d="M1352.7 17 l4.7 -6.2 l4.7 6.2z" fill="#ff0000"/>
<path d="M1352 124 l5 -5 l5 5 l-5 5z" fill="#ff0000"/>
<path d="M1352.7 231 h9.4 l-4.7 6z" fill="#ff0000"/>
<circle cx="38.5" cy="124" r="3.5" fill="#ff0000" stroke="#ff9090" stroke-width="1" shape-rendering="auto"/>
<g font-family="'Liberation Sans',sans-serif" shape-rendering="auto">
<text x="38.3" y="31.4" fill="#ff0000" font-size="12.9" text-anchor="start">2 Датчик Полож Коленчатого Вала (В)</text>
<text x="38" y="259" fill="#ffff00" font-size="13" text-anchor="start">3 ДПРВ Датчик Положения Распред Вала (В)</text>
<text x="38" y="411" fill="#0000ff" font-size="13" text-anchor="start">4 Датчик синхронизации (В)</text>
<text x="29" y="45.6" fill="#e8e8e8" font-size="9.5" text-anchor="end">6.84</text>
<text x="29" y="72.6" fill="#e8e8e8" font-size="9.5" text-anchor="end">4.56</text>
<text x="29" y="99.6" fill="#e8e8e8" font-size="9.5" text-anchor="end">2.28</text>
<text x="29" y="126.6" fill="#e8e8e8" font-size="9.5" text-anchor="end">0</text>
<text x="29" y="153.6" fill="#e8e8e8" font-size="9.5" text-anchor="end">-2.28</text>
<text x="29" y="180.6" fill="#e8e8e8" font-size="9.5" text-anchor="end">-4.56</text>
<text x="29" y="207.6" fill="#e8e8e8" font-size="9.5" text-anchor="end">-6.84</text>
<text x="29" y="259.6" fill="#e8e8e8" font-size="9.5" text-anchor="end">7.20</text>
<text x="29" y="273.6" fill="#e8e8e8" font-size="9.5" text-anchor="end">5.40</text>
<text x="29" y="287.6" fill="#e8e8e8" font-size="9.5" text-anchor="end">3.60</text>
<text x="29" y="301.6" fill="#e8e8e8" font-size="9.5" text-anchor="end">1.80</text>
<text x="29" y="315.6" fill="#e8e8e8" font-size="9.5" text-anchor="end">0</text>
<text x="29" y="329.6" fill="#e8e8e8" font-size="9.5" text-anchor="end">-1.80</text>
<text x="29" y="343.6" fill="#e8e8e8" font-size="9.5" text-anchor="end">-3.60</text>
<text x="29" y="357.6" fill="#e8e8e8" font-size="9.5" text-anchor="end">-5.40</text>
<text x="29" y="371.6" fill="#e8e8e8" font-size="9.5" text-anchor="end">-7.20</text>
<text x="29" y="411.6" fill="#e8e8e8" font-size="9.5" text-anchor="end">5.76</text>
<text x="29" y="424.6" fill="#e8e8e8" font-size="9.5" text-anchor="end">3.84</text>
<text x="29" y="438.6" fill="#e8e8e8" font-size="9.5" text-anchor="end">1.92</text>
<text x="29" y="452.6" fill="#e8e8e8" font-size="9.5" text-anchor="end">0</text>
<text x="29" y="466.6" fill="#e8e8e8" font-size="9.5" text-anchor="end">-1.92</text>
<text x="209" y="499" fill="#e8e8e8" font-size="12.2" text-anchor="middle">3.23616</text>
<text x="384" y="499" fill="#e8e8e8" font-size="12.2" text-anchor="middle">3.25616</text>
<text x="559" y="499" fill="#e8e8e8" font-size="12.2" text-anchor="middle">3.27616</text>
<text x="735" y="499" fill="#e8e8e8" font-size="12.2" text-anchor="middle">3.29616</text>
<text x="910" y="499" fill="#e8e8e8" font-size="12.2" text-anchor="middle">3.31616</text>
<text x="1086" y="499" fill="#e8e8e8" font-size="12.2" text-anchor="middle">3.33616</text>
<text x="1261" y="499" fill="#e8e8e8" font-size="12.2" text-anchor="middle">3.35616</text>
</g>
</svg>
</div>
<div id="srow" style="left:1px;top:603px;width:1364px;height:17px;"></div>
<div class="btn3" style="left:1px;top:603px;width:16.5px;height:17px;"><svg width="15" height="15" viewBox="0 0 15 15" style="left:0;top:0"><circle cx="7.5" cy="7.5" r="5.5" fill="#f4f4f4" stroke="#000"/><path d="M4.500 7.500h6" stroke="#000090" stroke-width="2"/></svg></div>
<div style="left:17.5px;top:603px;width:68px;height:17px;background:#fff"><span style="left:3px;top:1px;font-size:11px">150 мс</span><i class="arr" style="left:55px;top:7px"></i></div>
<div class="btn3" style="left:85.5px;top:603px;width:17px;height:17px;"><svg width="15" height="15" viewBox="0 0 15 15" style="left:0;top:0"><circle cx="7.5" cy="7.5" r="5.5" fill="#f4f4f4" stroke="#000"/><path d="M4.500 7.500h6M7.500 4.500v6" stroke="#b00000" stroke-width="2"/></svg></div>
<div style="left:102.5px;top:603px;width:64px;height:17px;background:#fff"><span style="left:3px;top:1px;font-size:11px">20</span><i class="arr" style="left:51px;top:7px"></i></div>
<div class="btn3" style="left:167px;top:603px;width:23px;height:17px;"><svg width="21" height="15" viewBox="0 0 21 15" style="left:0;top:0"><path d="M6.500 4v7" stroke="#000" stroke-width="1.600"/><path d="M8 7.500l6-4v8z" fill="#000"/></svg></div>
<div class="btn3" style="left:191px;top:603px;width:17px;height:17px;"><svg width="15" height="15" viewBox="0 0 15 15" style="left:0;top:0"><path d="M4.500 7.500l4-3.500v7z" fill="#000"/></svg></div>
<div class="btn3" style="left:285px;top:603px;width:16.5px;height:17px;"></div>
<div class="btn3" style="left:1299px;top:603px;width:17px;height:17px;"><svg width="15" height="15" viewBox="0 0 15 15" style="left:0;top:0"><path d="M10 7.500l-4-3.500v7z" fill="#000"/></svg></div>
<div class="btn3" style="left:1317.5px;top:603px;width:23px;height:17px;"><svg width="21" height="15" viewBox="0 0 21 15" style="left:0;top:0"><path d="M14.500 4v7" stroke="#000" stroke-width="1.600"/><path d="M13 7.500l-6-4v8z" fill="#000"/></svg></div>
<div class="btn3" style="left:1342px;top:603px;width:23px;height:17px;border-left-color:#7aa0d0"><svg width="21" height="15" viewBox="0 0 21 15" style="left:0;top:0"><path d="M15 7.500l-8-4v8z" fill="#0000ff"/></svg></div>
<div id="panel" style="left:1px;top:620px;width:1364px;height:89px;"></div>
<div style="left:410px;top:620px;width:546px;height:7px;border:1px solid #a0a0a0;background:#f4f4f4"><svg width="544" height="5" viewBox="0 0 544 5" style="left:0;top:0"><path d="M4.500 1h6l-3 3zM532.500 1h6l-3 3z" fill="#3090ff"/><path d="M14 2.500h516" stroke="#3090ff" stroke-width="1" stroke-dasharray="1 2"/></svg></div>
<div class="grp" style="left:283px;top:635px;width:304px;height:72px;"></div>
<div class="grp" style="left:591px;top:635px;width:105.5px;height:72px;"><b style="color:#000080;letter-spacing:0px">Частота</b></div>
<div class="grp" style="left:701px;top:635px;width:125.5px;height:72px;"><b style="color:#606060;letter-spacing:-0.2px">Синхронизация</b></div>
<div class="grp" style="left:831px;top:635px;width:174.5px;height:72px;"><b style="color:#000080;letter-spacing:0.05px">Управление</b></div>
<div class="grp" style="left:1011px;top:635px;width:68px;height:72px;"><b style="color:#000080;letter-spacing:0px">Таймеры</b></div>
<div class="chb" style="left:289px;top:631px;width:26px;height:18px;">1</div>
<div class="chb" style="left:316.5px;top:631px;width:47px;height:18px;background:linear-gradient(#ff3a3a,#ff0000 40%,#e80000);color:#000;font-weight:bold;font-size:14px;">2</div>
<div class="chb" style="left:365px;top:631px;width:26px;height:18px;background:linear-gradient(#ffff40,#ffff00 40%,#e8e800);color:#000;">3</div>
<div class="chb" style="left:392px;top:631px;width:26px;height:18px;background:linear-gradient(#2020ff,#0000ff 40%,#0000e0);color:#000;">4</div>
<div class="chb" style="left:419px;top:631px;width:26px;height:18px;">5</div>
<div class="chb" style="left:446px;top:631px;width:26px;height:18px;">6</div>
<div class="chb" style="left:473px;top:631px;width:26px;height:18px;">D</div>
<div style="left:291px;top:656px;width:177px;height:21px;background:#fff;border:1px solid #ff0000;overflow:hidden"><span style="left:3px;top:2px;font-size:11px;letter-spacing:0.05px">Датчик Полож Коленчатого Ва</span><div class="btn3" style="left:157px;top:1px;width:18px;height:17px;background:#f0f0f0"><svg width="16" height="15" viewBox="0 0 16 15" style="left:0;top:0"><path d="M4 8.500h9" stroke="#000" stroke-width="1.400" stroke-dasharray="2 1.500"/></svg></div></div>
<svg style="left:471px;top:657px;" width="20" height="20" viewBox="0 0 20 20" fill="none"><rect x="4" y="1" width="11" height="11" fill="#fff" stroke="#000" stroke-width="1.200"/><rect x="4.500" y="9" width="10" height="3" fill="#606060"/><path d="M5 9.500h9" stroke="#00a000" stroke-dasharray="1 1"/><path d="M7 3.500l2.500 4M6 4.500h1M11 3.500h1M12.500 5h1" stroke="#404040" stroke-width=".8"/><path d="M3.500 10c-3 1.500-2.500 5.500 1.500 5.500" stroke="#000090" stroke-width="1.200"/><path d="M4.500 13l3 2.500-3 2.500z" fill="#000090"/><path d="M15.500 10c3 1.500 2.500 5.500-1.500 5.500" stroke="#ff0000" stroke-width="1.200"/><path d="M14.500 13l-3 2.500 3 2.500z" fill="#ff0000"/></svg>
<div class="chk" style="left:292px;top:678px;width:24px;height:24px;"></div>
<div class="chk" style="left:367px;top:678px;width:24px;height:24px;"></div>
<svg style="left:292px;top:678px;" width="150" height="24" viewBox="0 0 150 24" fill="none">
<ellipse cx="13.500" cy="13" rx="6" ry="3.600" fill="#e0e0e0" stroke="#303030" stroke-width="1.200"/><circle cx="13.500" cy="13" r="2.600" fill="#101010"/><path d="M8 10.500c3-2.500 8-2.500 11 0" stroke="#505050" stroke-width="1.600"/><path d="M10 16.500l2 .5" stroke="#c00000"/>
<path d="M29 7l2-3 2 3 2-3 2 3 2-3 2 3 2-3 2 3" stroke="#800080" stroke-width="1.400"/><path d="M40 9l5-4-1 5z" fill="#800080"/><path d="M34 10.500h6l-3 3z" fill="#000"/><path d="M29 17c2-3 3-3 5 0s3 3 5 0 3-3 5 0" stroke="#800080" stroke-width="1.400"/>
<path d="M62 3l7 7h-4.500v3h-5v-3h-4.500z" fill="#800080"/><path d="M62 21l7-7h-4.500v-1.500h-5v1.500h-4.500z" fill="#0000ff"/><path d="M62 9v8M60.500 9.500h1.500M60.500 17h3" stroke="#fff" stroke-width="1.200"/>
<path d="M80 7.500h16M80 18.500h16" stroke="#000" stroke-width="1.200"/><path d="M80 13.500h16" stroke="#000" stroke-dasharray="2 1"/>
<text x="107.500" y="15.500" font-family="'Liberation Serif',serif" font-style="italic" font-weight="bold" font-size="14" fill="#000">f</text><text x="113.500" y="16" font-family="'Liberation Serif',serif" font-style="italic" font-weight="bold" font-size="9" fill="#000">x</text>
<path d="M131 7l10 10" stroke="#000" stroke-width="3.400" stroke-linecap="round"/><path d="M131.500 7.500l9.500 9.500" stroke="#f0f0f0" stroke-width="1.400" stroke-linecap="round"/><circle cx="131" cy="7" r="2.600" fill="#f0f0f0" stroke="#000" stroke-width="1.200"/><path d="M143 5l-10 10" stroke="#000" stroke-width="1.400"/><path d="M139.500 7.500l3.500-3.500 1 1-3.500 3.500z" fill="#606060" stroke="#000" stroke-width=".6"/><path d="M130 18l3-3" stroke="#3060c0" stroke-width="4.500" stroke-linecap="round"/>
</svg>
<svg style="left:505.5px;top:648.3px;" width="64" height="64" viewBox="-32 -32 64 64" fill="none">
<defs><linearGradient id="kg541" x1="0" y1="0" x2="1" y2="1"><stop offset="0" stop-color="#f4f4f4"/><stop offset=".45" stop-color="#b0b0b0"/><stop offset=".75" stop-color="#303030"/><stop offset="1" stop-color="#000"/></linearGradient></defs>
<path d="M-14.94 12.53 L-18 15.11 M-15.97 11.18 L-19.25 13.48 M-16.89 9.75 L-20.35 11.75 M-17.67 8.24 L-21.3 9.93 M-18.32 6.67 L-22.08 8.04 M-18.84 5.05 L-22.7 6.08 M-19.2 3.39 L-23.14 4.08 M-19.43 1.7 L-23.41 2.05 M-19.5 0 L-23.5 0 M-19.43 -1.7 L-23.41 -2.05 M-19.2 -3.39 L-23.14 -4.08 M-18.84 -5.05 L-22.7 -6.08 M-18.32 -6.67 L-22.08 -8.04 M-17.67 -8.24 L-21.3 -9.93 M-16.89 -9.75 L-20.35 -11.75 M-15.97 -11.18 L-19.25 -13.48 M-14.94 -12.53 L-18 -15.11 M-13.79 -13.79 L-16.62 -16.62 M-12.53 -14.94 L-15.11 -18 M-11.18 -15.97 L-13.48 -19.25 M-9.75 -16.89 L-11.75 -20.35 M-8.24 -17.67 L-9.93 -21.3 M-6.67 -18.32 L-8.04 -22.08 M-5.05 -18.84 L-6.08 -22.7 M-3.39 -19.2 L-4.08 -23.14 M-1.7 -19.43 L-2.05 -23.41 M-0 -19.5 L-0 -23.5 M1.7 -19.43 L2.05 -23.41 M3.39 -19.2 L4.08 -23.14 M5.05 -18.84 L6.08 -22.7 M6.67 -18.32 L8.04 -22.08 M8.24 -17.67 L9.93 -21.3 M9.75 -16.89 L11.75 -20.35 M11.18 -15.97 L13.48 -19.25 M12.53 -14.94 L15.11 -18 M13.79 -13.79 L16.62 -16.62 M14.94 -12.53 L18 -15.11 M15.97 -11.18 L19.25 -13.48 M16.89 -9.75 L20.35 -11.75 M17.67 -8.24 L21.3 -9.93 M18.32 -6.67 L22.08 -8.04 M18.84 -5.05 L22.7 -6.08 M19.2 -3.39 L23.14 -4.08 M19.43 -1.7 L23.41 -2.05 M19.5 -0 L23.5 -0 M19.43 1.7 L23.41 2.05 M19.2 3.39 L23.14 4.08 M18.84 5.05 L22.7 6.08 M18.32 6.67 L22.08 8.04 M17.67 8.24 L21.3 9.93 M16.89 9.75 L20.35 11.75 M15.97 11.18 L19.25 13.48 M14.94 12.53 L18 15.11" stroke="#8a8a8a" stroke-width="1"/>
<path d="M-14.94 12.53 L-19.15 16.07 M-19.31 -2.71 L-24.76 -3.48 M-10.9 -16.17 L-13.98 -20.73 M6.99 -18.2 L8.96 -23.34 M18.08 -7.3 L23.18 -9.37 M14.94 12.53 L19.15 16.07" stroke="#000" stroke-width="1.100"/>
<circle cx="0" cy="0" r="17" fill="#f2f2f2" stroke="url(#kg541)" stroke-width="2.200"/>
<path d="M-9.51 -14.09 L-8.87 -8.49 L-4.55 -11.4 z" fill="#0000ff"/>
<text x="0" y="4" text-anchor="middle" font-family="'Liberation Sans',sans-serif" font-size="11" fill="#000">10В</text>
</svg>
<span class="kl" style="left:513px;top:646.5px;">10В</span>
<span class="kl" style="left:546px;top:643.5px;">100В</span>
<span class="kl" style="left:563px;top:660.5px;">200В</span>
<span class="kl" style="left:558px;top:691px;">500В</span>
<span class="kl" style="left:503px;top:663px;">1В</span>
<span class="kl" style="left:497px;top:691px;">0.1В</span>
<svg style="left:609.5px;top:648.5px;" width="64" height="64" viewBox="-32 -32 64 64" fill="none">
<defs><linearGradient id="kg645" x1="0" y1="0" x2="1" y2="1"><stop offset="0" stop-color="#f4f4f4"/><stop offset=".45" stop-color="#b0b0b0"/><stop offset=".75" stop-color="#303030"/><stop offset="1" stop-color="#000"/></linearGradient></defs>
<path d="M-16.89 9.75 L-20.35 11.75 M-19 4.39 L-22.9 5.29 M-19.45 -1.36 L-23.44 -1.64 M-18.2 -6.99 L-21.94 -8.42 M-15.37 -12.01 L-18.52 -14.47 M-11.18 -15.97 L-13.48 -19.25 M-6.03 -18.55 L-7.26 -22.35 M-0.34 -19.5 L-0.41 -23.5 M5.37 -18.74 L6.48 -22.59 M10.62 -16.35 L12.8 -19.71 M14.94 -12.53 L18 -15.11 M17.95 -7.62 L21.63 -9.18 M19.39 -2.04 L23.37 -2.46 M19.14 3.72 L23.07 4.48 M17.22 9.15 L20.75 11.03" stroke="#b8b8b8" stroke-width="1"/>
<path d="M-16.89 9.75 L-21.65 12.5 M-12.53 -14.94 L-16.07 -19.15 M-0 -19.5 L-0 -25 M13.05 -14.49 L16.73 -18.58" stroke="#000" stroke-width="1.100"/>
<circle cx="0" cy="0" r="17" fill="#f2f2f2" stroke="url(#kg645)" stroke-width="2.200"/>
<path d="M11.38 -12.63 L6.1 -10.66 L9.96 -7.18 z" fill="#0000ff"/>
<text x="0" y="4" text-anchor="middle" font-family="'Liberation Sans',sans-serif" font-size="11" fill="#000">333K</text>
</svg>
<span class="kl" style="left:638px;top:640.5px;">250K</span>
<span class="kl" style="left:604px;top:650.5px;">100K</span>
<span class="kl" style="left:659px;top:650.5px;">333K</span>
<span class="kl d" style="left:667.5px;top:663px;">500K</span>
<span class="kl" style="left:610px;top:691px;">1K</span>
<span class="kl d" style="left:663px;top:690px;">1M</span>
<div class="chk" style="left:767px;top:648px;width:24px;height:23px;border-color:#f0f0f0"></div>
<div class="chk" style="left:795px;top:676px;width:24px;height:23px;border-color:#f0f0f0"></div>
<svg style="left:708px;top:648px;" width="112" height="52" viewBox="0 0 112 52" fill="none" stroke="#a0a0a0" stroke-width="1.200">
<path d="M6 6l4 3.500-4 3.500z" fill="#a0a0a0" stroke="none"/><path d="M10 9.500h12" stroke-dasharray="1 1"/><path d="M6 15c2 3 5 3 6.500 0s1.500-6 3-9 3.500-3.500 6-2.500"/>
<path d="M34 18.500h9v-12.500h8"/><path d="M39 8v8M36.500 12h5" /><path d="M39 6.500l2.500 3.500h-5z" fill="#a0a0a0" stroke="none"/>
<path d="M63 7.500h9v12.500h8"/><path d="M76 9v8M73.500 13.500h5"/><path d="M76 18l2.500-3.500h-5z" fill="#a0a0a0" stroke="none"/>
<path d="M91 5l4 3.500-4 3.500z" fill="#a0a0a0" stroke="none"/><path d="M95 8.500h13" stroke-dasharray="1 1"/><path d="M91 14c2 3 5 3 6.500 0s1.500-6 3-9 3.500-3.500 5-3"/><path d="M99.500 9.500l5.500 4.500 1.500 5h-4l-3-3.500z" fill="#a0a0a0" stroke="none"/>
<path d="M63 34l4 4-4 4z" fill="#a0a0a0" stroke="none"/><path d="M67 35.500h10M67 41h13"/><path d="M67 38.500h11" stroke-dasharray="1 1"/><path d="M73 30.500h7l-3.500 3zM73 46h7l-3.500-3z" fill="#a0a0a0" stroke="none"/>
<path d="M91 40.500h18" stroke-width="2"/><path d="M94 36.500l6 4-6 4zM106 36.500l-6 4 6 4z" fill="#a0a0a0" stroke="none"/>
</svg>
<div style="left:710px;top:677px;width:47px;height:22px;border:1px solid #a8a8a8;background:#f0f0f0"><span style="left:5px;top:3px;font-size:11.500px">2</span><i class="arr" style="left:33px;top:9px;border-top-color:#909090"></i></div>
<div class="cb " style="left:835px;top:646px;width:34px;height:28px;"><svg width="32" height="26" viewBox="0 0 32 26" style="left:0;top:0"><rect x="10.500" y="6.500" width="3.5" height="13" fill="#0000ff" stroke="#005000" stroke-width="1.300"/><rect x="16.500" y="6.500" width="3.5" height="13" fill="#0000ff" stroke="#005000" stroke-width="1.300"/></svg></div>
<div class="cb " style="left:872px;top:646px;width:46px;height:28px;"><svg width="44" height="26" viewBox="0 0 44 26" style="left:0;top:0" fill="none"><path d="M8 13c3-11 8-11 13.500 0s10 11 14-1" stroke="#ff0000" stroke-width="1.200"/></svg></div>
<div class="cb r" style="left:921px;top:646px;width:46px;height:28px;"><svg width="44" height="26" viewBox="0 0 44 26" style="left:0;top:0" fill="none"><path d="M6 8l1 3 2-1 2-4 2 6 2-4 2 1 2-4 2 6 2-4 2 1 2-4 2 6 2-3 2 1" stroke="#ff0000" stroke-width="1.100"/><path d="M38 6.500v5l-4-2.500z" fill="#000080"/><path d="M6 18h3l1 3 2-6 2 4 2-1 2 3 2-6 2 4 2-1 2 3 2-6 2 4 2 0" stroke="#0000ff" stroke-width="1.100"/><path d="M38 16.500v5l-4-2.500z" fill="#000080"/></svg></div>
<div class="cb r" style="left:970px;top:646px;width:31px;height:28px;"><svg width="29" height="26" viewBox="0 0 29 26" style="left:0;top:0" fill="none"><text x="6.500" y="8.500" font-family="'Liberation Mono',monospace" font-weight="bold" font-size="6.500" fill="#000" textLength="16" lengthAdjust="spacingAndGlyphs">AUTO</text><path d="M7 10.500c5-2 10-2 15 0" stroke="#0000ff" stroke-width="1.200"/><path d="M5.500 10l3 0-1 3zM23.500 10l-3 0 1 3z" fill="#0000ff"/><circle cx="14.500" cy="16.500" r="5" fill="#f4f4f4" stroke="#000" stroke-width="1.300"/><circle cx="14.500" cy="16.500" r="7" stroke="#000" stroke-width="1" stroke-dasharray="1 2.600"/><path d="M12.500 14.500l2 4 2-4" stroke="#0000ff" stroke-width="1.100"/></svg></div>
<div class="cb " style="left:835px;top:676px;width:83px;height:28px;"><svg width="81" height="26" viewBox="0 0 81 26" style="left:0;top:0"><path d="M9.500 4l10 9-10 9z" fill="#00ff00" stroke="#707070" stroke-width=".8"/></svg><span style="left:38.500px;top:6.5px;font-weight:bold;font-size:12px;letter-spacing:0.3px">Пуск</span></div>
<div class="cb bl" style="left:921px;top:676px;width:46px;height:28px;"><span style="left:6px;top:7px;font-weight:bold;font-size:12.500px;color:#008000;letter-spacing:0.1px">45.35</span></div>
<div class="cb " style="left:970px;top:676px;width:31px;height:28px;"><svg width="29" height="26" viewBox="0 0 29 26" style="left:0;top:0" fill="none"><text x="6.500" y="8.500" font-family="'Liberation Mono',monospace" font-weight="bold" font-size="6.500" fill="#000" textLength="16" lengthAdjust="spacingAndGlyphs">AUTO</text><path d="M7 19c1 3 5 3 6.500-1s1-8 3-8 3 1 3 3" stroke="#a00000" stroke-width="1.100"/><path d="M5 15.500h6" stroke="#0000ff" stroke-width="1.400"/><path d="M11.500 15.500l-3.500-3v6z" fill="#0000ff"/><path d="M20 10.500l5.500 5-5.500 5z" fill="#00e000" stroke="#000" stroke-width="1"/></svg></div>
<div class="cb g" style="left:1020px;top:646px;width:49px;height:28px;"><svg width="47" height="26" viewBox="0 0 47 26" style="left:0;top:0"><circle cx="17.500" cy="13.500" r="10.500" fill="#f6f6f6" stroke="#000" stroke-width="1.200"/><path d="M17 6v8l5-6" stroke="#909090" stroke-width="1.600" fill="none"/><path d="M6 6.500h4v-3l6 5.500-6 5.500v-3h-4z" fill="#40c0b0" stroke="#000" stroke-width="1"/><path d="M34 11.500h7l-3.500 4z" fill="#000"/></svg></div>
<div class="cb g" style="left:1020px;top:676px;width:49px;height:28px;"><svg width="47" height="26" viewBox="0 0 47 26" style="left:0;top:0"><circle cx="17.500" cy="13.500" r="10.500" fill="#f6f6f6" stroke="#000" stroke-width="1.200"/><path d="M17 6v8l5-6" stroke="#909090" stroke-width="1.600" fill="none"/><path d="M19 15.500h4v-3l6 5.500-6 5.500v-3h-4z" fill="#ff30e0" stroke="#000" stroke-width="1"/><path d="M34 11.500h7l-3.500 4z" fill="#000"/></svg></div>
<div class="sp" style="left:1px;top:711px;width:188.5px;height:17px;"><span style="left:2px;top:0;letter-spacing:-0.22px">USB Осциллограф  2.01.8175</span></div>
<div class="sp" style="left:192px;top:711px;width:1123px;height:17px;"></div>
<div class="sp" style="left:1318px;top:711px;width:48px;height:17px;"><span style="left:2px;top:0">2.4</span></div>
<div id="task"><div style="left:22px;top:1px;width:14px;height:8px;border-radius:7px;background:#2a4a8c"></div><i style="left:59px;width:59px"></i><i style="left:430px;width:54px"></i><i style="left:492px;width:59px"></i><i style="left:554px;width:59px"></i><i style="left:1350px;width:16px;background:#a8a8a8"></i></div>

</div>
</body></html>
